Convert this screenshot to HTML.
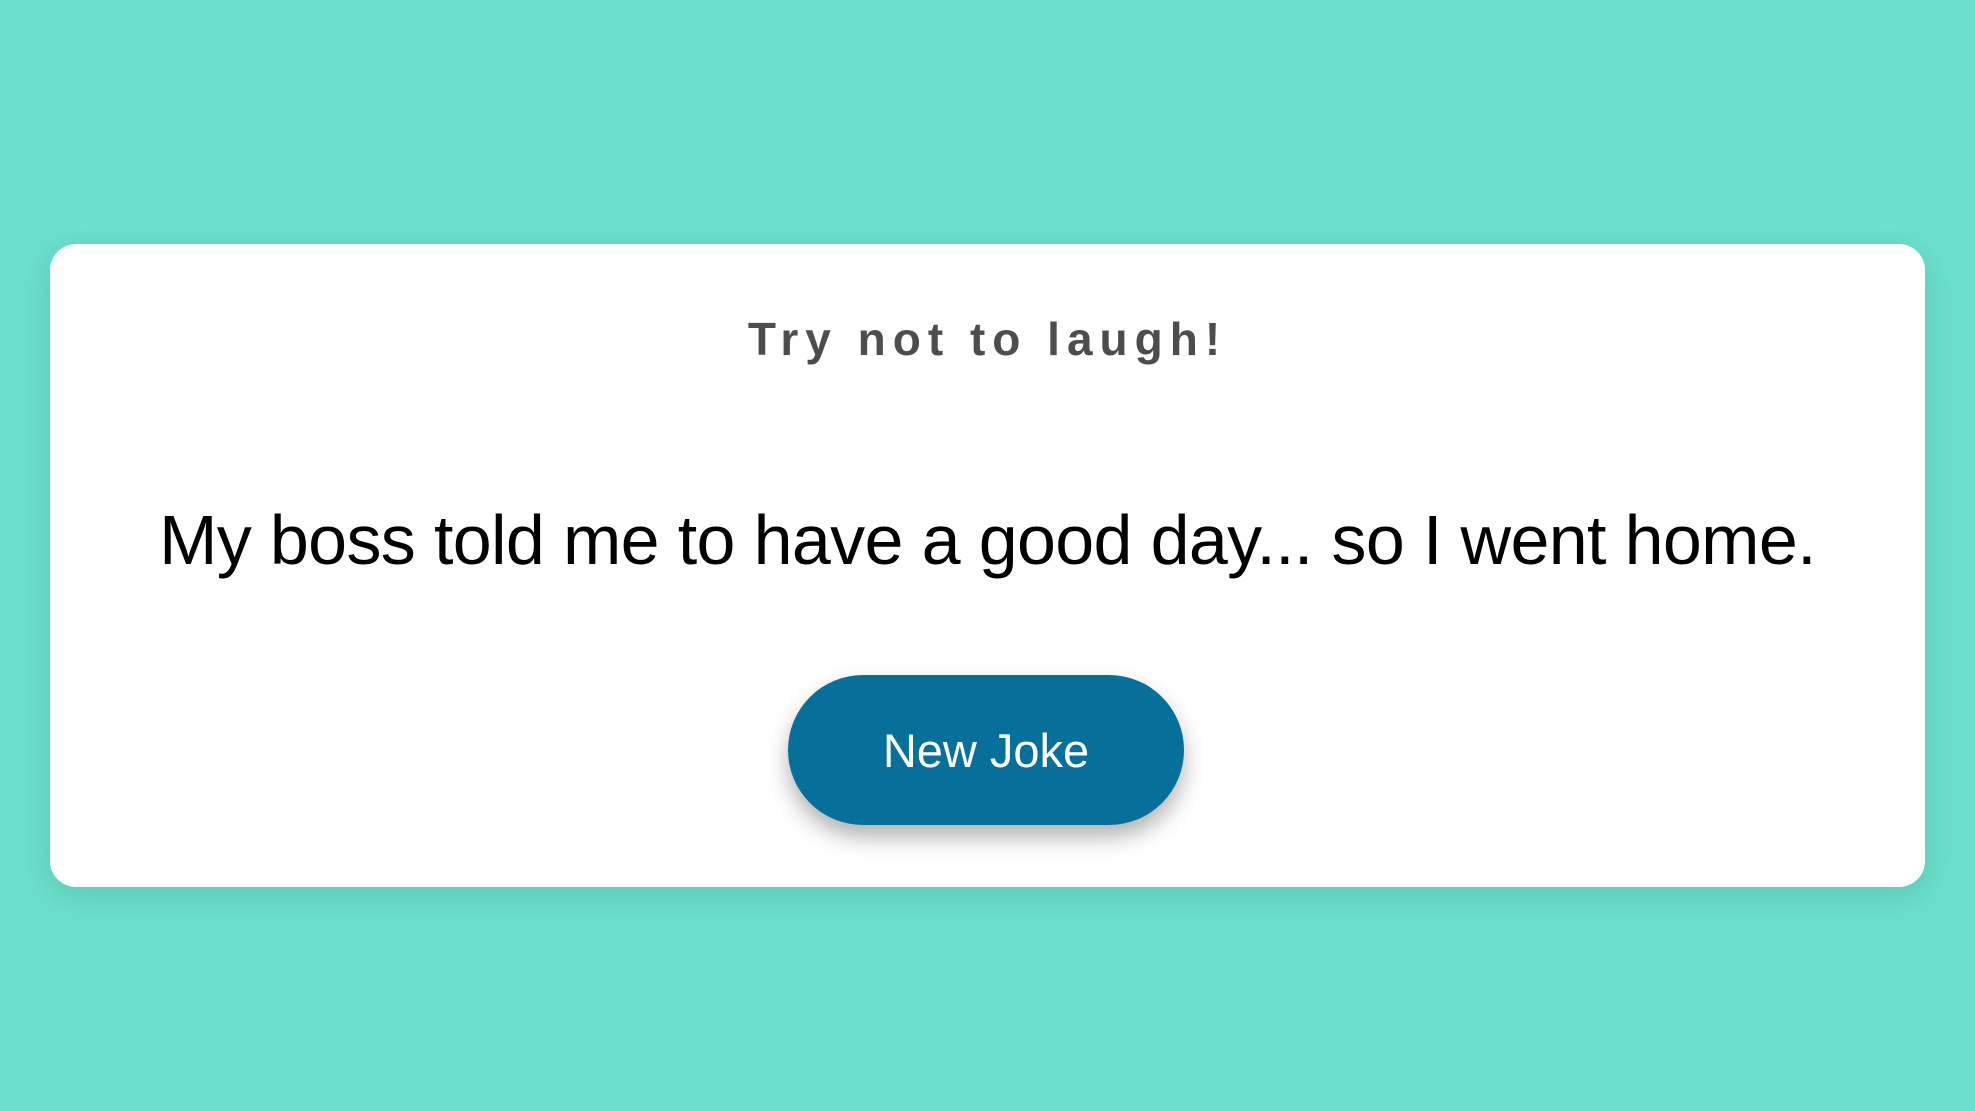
<!DOCTYPE html>
<html><head><style>
html,body{margin:0;padding:0}
body{width:1975px;height:1111px;background:#6be0cd;font-family:"Liberation Sans",sans-serif;position:relative;overflow:hidden}
.card{position:absolute;left:50px;top:244px;width:1875px;height:643px;background:#fff;border-radius:26px;box-shadow:0 8px 30px rgba(0,0,0,0.12)}
.t{position:absolute;left:0;right:0;top:309px;text-align:center;font-size:46px;font-weight:bold;color:#4d4d4d;letter-spacing:7px;line-height:60px}
.j{position:absolute;left:0;right:0;top:495px;text-align:center;font-size:70px;color:#000;line-height:90px;letter-spacing:-0.65px}
.b{position:absolute;left:788px;top:675px;width:396px;height:150px;border-radius:75px;background:#066f9a;color:#fff;font-size:47px;line-height:152px;text-align:center;box-shadow:0 12px 22px rgba(0,0,0,0.3)}
</style></head><body>
<div class="card"></div>
<div class="t">Try not to laugh!</div>
<div class="j">My boss told me to have a good day... so I went home.</div>
<div class="b">New Joke</div>
</body></html>
